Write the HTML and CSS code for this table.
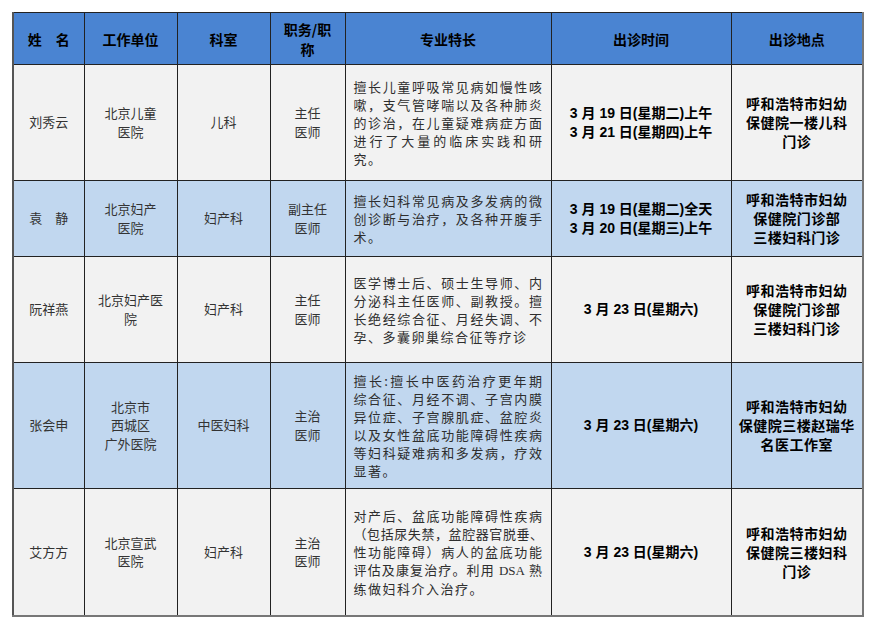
FILE: index.html
```html
<!DOCTYPE html>
<html lang="zh">
<head>
<meta charset="utf-8">
<title>出诊安排</title>
<link rel="stylesheet" href="styles.css">
</head>
<body>
<table class="sched">
  <colgroup>
    <col class="c-name"><col class="c-unit"><col class="c-dept"><col class="c-title"><col class="c-spec"><col class="c-time"><col class="c-place">
  </colgroup>
  <thead>
    <tr class="head">
      <th>姓　名</th>
      <th>工作单位</th>
      <th>科室</th>
      <th><span class="hl">职务/职</span><span class="hl">称</span></th>
      <th>专业特长</th>
      <th>出诊时间</th>
      <th>出诊地点</th>
    </tr>
  </thead>
  <tbody>
    <tr class="row light r1">
      <td>刘秀云</td>
      <td>北京儿童<br>医院</td>
      <td>儿科</td>
      <td>主任<br>医师</td>
      <td class="spec">
        <span class="ln">擅长儿童呼吸常见病如慢性咳</span>
        <span class="ln">嗽，支气管哮喘以及各种肺炎</span>
        <span class="ln">的诊治，在儿童疑难病症方面</span>
        <span class="ln">进行了大量的临床实践和研</span>
        <span class="ln last">究。</span>
      </td>
      <td class="time">3 月 19 日(星期二)上午<br>3 月 21 日(星期四)上午</td>
      <td class="place">呼和浩特市妇幼<br>保健院一楼儿科<br>门诊</td>
    </tr>
    <tr class="row blue r2">
      <td>袁　静</td>
      <td>北京妇产<br>医院</td>
      <td>妇产科</td>
      <td>副主任<br>医师</td>
      <td class="spec">
        <span class="ln">擅长妇科常见病及多发病的微</span>
        <span class="ln">创诊断与治疗，及各种开腹手</span>
        <span class="ln last">术。</span>
      </td>
      <td class="time">3 月 19 日(星期二)全天<br>3 月 20 日(星期三)上午</td>
      <td class="place">呼和浩特市妇幼<br>保健院门诊部<br>三楼妇科门诊</td>
    </tr>
    <tr class="row light r3">
      <td>阮祥燕</td>
      <td>北京妇产医<br>院</td>
      <td>妇产科</td>
      <td>主任<br>医师</td>
      <td class="spec">
        <span class="ln">医学博士后、硕士生导师、内</span>
        <span class="ln">分泌科主任医师、副教授。擅</span>
        <span class="ln">长绝经综合征、月经失调、不</span>
        <span class="ln last">孕、多囊卵巢综合征等疗诊</span>
      </td>
      <td class="time">3 月 23 日(星期六)</td>
      <td class="place">呼和浩特市妇幼<br>保健院门诊部<br>三楼妇科门诊</td>
    </tr>
    <tr class="row blue r4">
      <td>张会申</td>
      <td>北京市<br>西城区<br>广外医院</td>
      <td>中医妇科</td>
      <td>主治<br>医师</td>
      <td class="spec">
        <span class="ln">擅长:擅长中医药治疗更年期</span>
        <span class="ln">综合征、月经不调、子宫内膜</span>
        <span class="ln">异位症、子宫腺肌症、盆腔炎</span>
        <span class="ln">以及女性盆底功能障碍性疾病</span>
        <span class="ln">等妇科疑难病和多发病，疗效</span>
        <span class="ln last">显著。</span>
      </td>
      <td class="time">3 月 23 日(星期六)</td>
      <td class="place">呼和浩特市妇幼<br>保健院三楼赵瑞华<br>名医工作室</td>
    </tr>
    <tr class="row light r5">
      <td>艾方方</td>
      <td>北京宣武<br>医院</td>
      <td>妇产科</td>
      <td>主治<br>医师</td>
      <td class="spec">
        <span class="ln">对产后、盆底功能障碍性疾病</span>
        <span class="ln tight">（包括尿失禁，盆腔器官脱垂、</span>
        <span class="ln">性功能障碍）病人的盆底功能</span>
        <span class="ln">评估及康复治疗。利用 <span class="lat">DSA</span> 熟</span>
        <span class="ln last">练做妇科介入治疗。</span>
      </td>
      <td class="time">3 月 23 日(星期六)</td>
      <td class="place">呼和浩特市妇幼<br>保健院三楼妇科<br>门诊</td>
    </tr>
  </tbody>
</table>
</body>
</html>
```

FILE: styles.css
```css
html, body {
  margin: 0;
  padding: 0;
  background: #ffffff;
}

body {
  padding: 12px 0 0 12px;
  font-family: "Noto Sans CJK SC", "Noto Sans", sans-serif;
  color: #333;
}

.sched {
  border-collapse: collapse;
  table-layout: fixed;
  width: 850px;
  border-top: 1px solid #111;
  border-left: 2px solid #555;
  border-right: 2px solid #777;
  border-bottom: 2px solid #777;
}

.c-name { width: 71px; }
.c-unit { width: 93px; }
.c-dept { width: 93px; }
.c-title { width: 75px; }
.c-spec { width: 206px; }
.c-time { width: 180px; }
.c-place { width: 132px; }

.sched th,
.sched td {
  border: 1px solid #222;
  padding: 0 4px;
  text-align: center;
  vertical-align: middle;
}

.head th {
  height: 51px;
  background: #4a84d2;
  color: #000;
  font-size: 14px;
  font-weight: 700;
  line-height: 18px;
}

.hl {
  display: block;
  line-height: 20px;
}

.row td {
  font-size: 13px;
  line-height: 18.5px;
  color: #333;
}

.light td { background: #f2f2f2; }
.blue td { background: #c1d7ef; }

.r1 td { height: 115px; }
.r2 td { height: 75px; }
.r3 td { height: 105px; }
.r4 td { height: 125px; }
.r5 td { height: 126px; }

.sched td.spec {
  text-align: left;
  padding: 0 8px;
  line-height: 18px;
  color: #2e2e2e;
}

.ln {
  display: block;
  white-space: nowrap;
  text-align: justify;
  text-align-last: justify;
  letter-spacing: 0.5px;
}

.ln.tight {
  letter-spacing: -0.6px;
}

.ln.last {
  text-align-last: left;
  letter-spacing: 1.5px;
}

.lat {
  font-family: "Liberation Serif", serif;
  letter-spacing: 0;
}

.sched td.time {
  font-family: "Liberation Sans", "Noto Sans CJK SC", sans-serif;
  font-size: 14px;
  font-weight: 700;
  line-height: 19px;
  color: #000;
}

.sched td.place {
  font-size: 14px;
  font-weight: 700;
  line-height: 19px;
  color: #000;
  letter-spacing: 0.5px;
}
```
